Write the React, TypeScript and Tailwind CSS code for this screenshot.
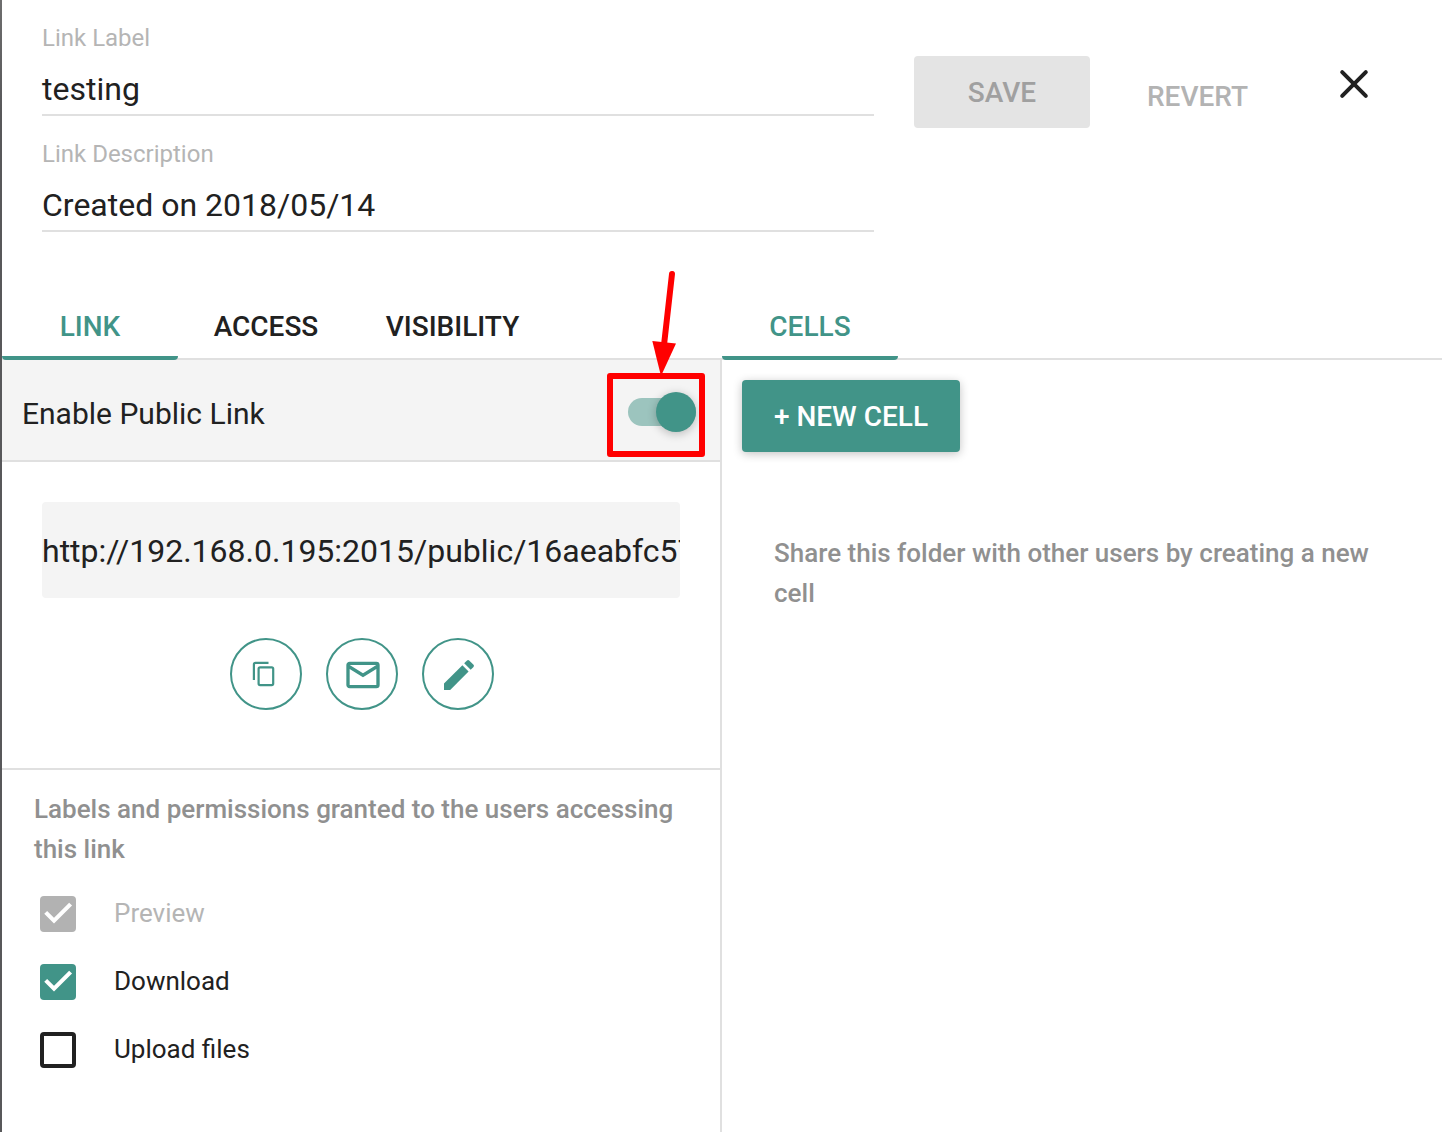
import React from "react";

function Field({ label, value }: { label: string; value: string }) {
  return (
    <div className="h-[116px] border-b-2 border-[#e0e0e0] flex flex-col justify-end">
      <div className="h-7 text-2xl leading-7 text-[#b5b5b5] whitespace-nowrap">{label}</div>
      <div className="mt-[15px] mb-[3px] h-11 text-[32px] leading-[44px] text-[#212121]">{value}</div>
    </div>
  );
}

function Check({ label, state }: { label: string; state: "disabled" | "on" | "off" }) {
  const box =
    state === "disabled" ? "bg-[#b2b2b2]" : state === "on" ? "bg-[#419488]" : "border-4 border-[#212121]";
  return (
    <div className="flex h-9 items-center gap-[38px]">
      <div className={"size-9 rounded-[4px] " + box}>
        {state !== "off" && (
          <svg viewBox="0 0 36 36" className="size-9" fill="none" stroke="#fff" strokeWidth="4.1">
            <path d="M5.7 16.4 14 24.7 30.6 8.1" />
          </svg>
        )}
      </div>
      <span
        className={
          "-mt-0.5 text-[26px] leading-9 " + (state === "disabled" ? "text-[#b5b5b5]" : "text-[#212121]")
        }
      >
        {label}
      </span>
    </div>
  );
}

function RoundButton({ children }: { children: React.ReactNode }) {
  return <button className="size-[72px] rounded-full border-2 border-[#419488] text-[#419488]">{children}</button>;
}

export default function App() {
  return (
    <div className="relative flex h-[1132px] w-[1442px] overflow-hidden bg-white font-['Roboto',sans-serif] text-[#212121]">
      <div className="w-0.5 shrink-0 bg-linear-to-b from-[#6e6e6e] via-[#58585a] via-10% to-[#58585a]" />
      <div className="flex min-w-0 flex-1 flex-col">
        <header className="flex h-[296px] shrink-0 pl-10">
          <div className="w-[832px]">
            <Field label="Link Label" value="testing" />
            <Field label="Link Description" value="Created on 2018/05/14" />
          </div>
          <button className="ml-10 mt-14 h-[72px] w-[176px] rounded-[4px] bg-[#e4e4e4] pt-0.5 text-[28px] font-medium text-[#a0a0a0]">
            SAVE
          </button>
          <button className="ml-[57px] mt-[61px] h-[72px] w-[101px] whitespace-nowrap text-[28px] font-medium text-[#b3b3b3]">
            REVERT
          </button>
          <svg viewBox="0 0 32 32" className="ml-[90px] mt-[68px] size-8" fill="none" stroke="#212121" strokeWidth="4" strokeLinecap="round">
            <path d="M4.2 4.2 27.8 27.8M27.8 4.2 4.2 27.8" />
          </svg>
        </header>

        <nav className="flex h-16 shrink-0 border-b-2 border-[#e0e0e0] text-[28px] font-medium leading-[62px]">
          <div className="-mb-0.5 flex w-[720px]">
            <div className="h-16 w-[176px] rounded-b-[4px] border-b-4 border-[#419488] text-center text-[#419488]">LINK</div>
            <div className="w-[176px] text-center">ACCESS</div>
            <div className="w-[197px] text-center">VISIBILITY</div>
          </div>
          <div className="h-16 w-[176px] rounded-b-[4px] border-b-4 border-[#419488] text-center text-[#419488]">CELLS</div>
        </nav>

        <div className="flex min-h-0 flex-1">
          <section className="w-[720px] shrink-0 border-r-2 border-[#e0e0e0]">
            <div className="flex h-[102px] items-center justify-between border-b-2 border-[#e0e0e0] bg-[#f4f4f4] pl-5 pr-6">
              <span className="mt-2 text-[30px] leading-9">Enable Public Link</span>
              <div className="mt-1 flex h-7 w-[68px] items-center justify-end rounded-full bg-[#9cc4be]">
                <div className="size-10 shrink-0 rounded-full bg-[#419488] shadow-[0_2px_10px_rgba(0,0,0,0.24)]" />
              </div>
            </div>

            <div className="h-[308px] border-b-2 border-[#e0e0e0] px-10 pt-10">
              <div className="h-24 overflow-hidden whitespace-nowrap rounded-[4px] bg-[#f4f4f4] text-[32px] leading-[98px]">
                http://192.168.0.195:2015/public/16aeabfc57
              </div>
              <div className="mt-10 flex justify-center gap-6 pl-0.5">
                <RoundButton>
                  <svg viewBox="0 0 68 68" className="size-[68px]" fill="none" stroke="currentColor" strokeWidth="2.2">
                    <path d="M36.5 22.9H23.5Q21.9 22.9 21.9 24.5V40" />
                    <rect x="26.6" y="27.3" width="14.6" height="17.8" rx="1.5" />
                  </svg>
                </RoundButton>
                <RoundButton>
                  <svg viewBox="0 0 24 24" className="ml-[15px] mt-px size-10" fill="currentColor">
                    <path d="M4 4H20A2 2 0 0 1 22 6V18A2 2 0 0 1 20 20H4C2.89 20 2 19.1 2 18V6C2 4.89 2.89 4 4 4M12 11L20 6H4L12 11M4 18H20V8.37L12 13.36L4 8.37V18Z" />
                  </svg>
                </RoundButton>
                <RoundButton>
                  <svg viewBox="0 0 68 68" className="size-[68px]" fill="currentColor">
                    <path d="M20 50V43.5L38.4 25.3 44.6 31.5 26.2 50Z" />
                    <path d="M40.2 23.2 43 20.5Q44.1 19.6 45.2 20.5L49.5 24.8Q50.5 25.9 49.5 27L46.7 29.8Z" />
                  </svg>
                </RoundButton>
              </div>
            </div>

            <p className="ml-8 mt-[19px] w-[660px] text-[26px] font-medium leading-10 text-[#909090]">
              Labels and permissions granted to the users accessing this link
            </p>
            <div className="ml-[38px] mt-[27px] flex flex-col gap-8">
              <Check label="Preview" state="disabled" />
              <Check label="Download" state="on" />
              <Check label="Upload files" state="off" />
            </div>
          </section>

          <section className="flex-1 pl-5 pt-5">
            <button className="h-[72px] w-[218px] rounded-[4px] bg-[#419488] pt-0.5 text-[28px] font-medium text-white shadow-[0_2px_10px_rgba(0,0,0,0.24)]">
              + NEW CELL
            </button>
            <p className="ml-8 mt-[81px] w-[620px] text-[26px] font-medium leading-10 text-[#909090]">
              Share this folder with other users by creating a new cell
            </p>
          </section>
        </div>
      </div>

      <svg viewBox="600 265 120 200" className="pointer-events-none absolute left-[600px] top-[265px] h-[200px] w-[120px]">
        <path d="M672 274 664 345" stroke="#f00" strokeWidth="6" strokeLinecap="round" />
        <path d="M652.3 341 676 343.5 661 376Z" fill="#f00" />
        <rect x="610" y="376" width="92" height="78" fill="none" stroke="#f00" strokeWidth="6" strokeLinejoin="round" />
      </svg>
    </div>
  );
}
